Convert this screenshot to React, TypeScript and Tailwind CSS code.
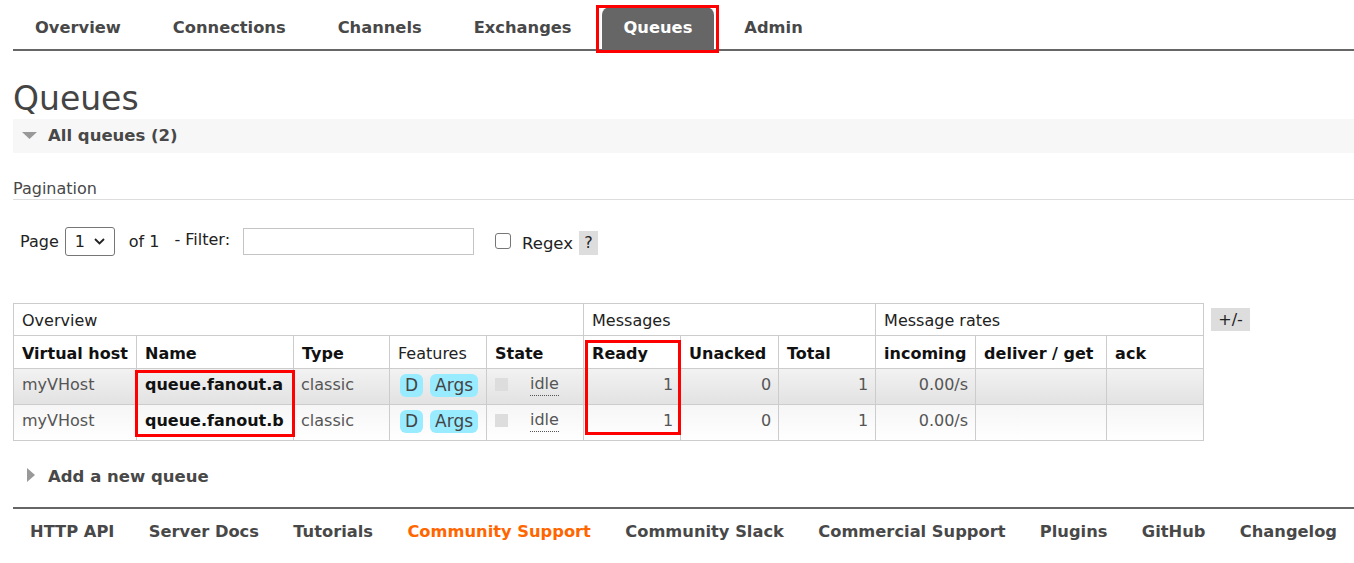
import React from "react";

const font = { fontFamily: '"DejaVu Sans", Verdana, sans-serif' };

function Badge({ children }: { children: React.ReactNode }) {
  return (
    <span className="inline-flex items-center justify-center h-[23px] px-[5px] rounded-[6px] bg-[#99ebff] text-[#444] text-[17px] leading-none">
      {children}
    </span>
  );
}

const tabs = ["Overview", "Connections", "Channels", "Exchanges", "Queues", "Admin"];
const footer = [
  "HTTP API",
  "Server Docs",
  "Tutorials",
  "Community Support",
  "Community Slack",
  "Commercial Support",
  "Plugins",
  "GitHub",
  "Changelog",
];

const rows = [
  { name: "queue.fanout.a", bg: "bg-linear-to-b from-[#f2f2f2] to-[#e2e2e2]" },
  { name: "queue.fanout.b", bg: "bg-linear-to-b from-[#f6f6f6] to-[#ffffff]" },
];

export default function App() {
  return (
    <div className="w-[1354px] h-[563px] bg-white text-[#484848] overflow-hidden" style={font}>
      {/* Nav */}
      <div className="ml-[13px] pt-[7px] border-b-2 border-[#666] flex gap-2">
        {tabs.map((t) =>
          t === "Queues" ? (
            <div key={t} className="relative">
              <div className="h-[42px] px-[22px] flex items-center bg-[#666] text-white font-bold text-[16.3px] rounded-t-[8px]">
                {t}
              </div>
              <div className="absolute left-[-6px] top-[-2px] w-[123px] h-[48px] border-[3px] border-[#ff0000]" />
            </div>
          ) : (
            <div key={t} className="h-[42px] px-[22px] flex items-center font-bold text-[16.3px] text-[#484848]">
              {t}
            </div>
          )
        )}
      </div>

      {/* Heading */}
      <h1 className="ml-[13px] pt-[27px] text-[33px] leading-[41px] text-[#444] font-normal">Queues</h1>

      {/* All queues bar */}
      <div className="ml-[13px] h-[34px] bg-[#f7f7f7] flex items-center pl-[9px]">
        <svg width="15" height="8" viewBox="0 0 15 8" className="mr-[11px]">
          <polygon points="0,0 15,0 7.5,7" fill="#999" />
        </svg>
        <span className="font-bold text-[16.5px] text-[#484848]">All queues (2)</span>
      </div>

      {/* Pagination label */}
      <div className="ml-[13px] mt-[26px] h-[21px] flex items-center border-b border-[#ddd] text-[16px] text-[#484848]">
        <span className="-mt-[1px]">Pagination</span>
      </div>

      {/* Pagination row */}
      <div className="ml-[20px] mt-[27px] h-[29px] flex items-center text-[16px] text-[#222]">
        <span>Page</span>
        <div className="ml-[6px] w-[50px] h-[29px] border border-[#767676] rounded-[3px] flex items-center pl-[9px] gap-[9px]">
          <span>1</span>
          <svg width="11" height="7" viewBox="0 0 11 7">
            <polyline points="1,1 5.5,5.5 10,1" fill="none" stroke="#222" strokeWidth="1.8" />
          </svg>
        </div>
        <span className="ml-[14px]">of 1</span>
        <span className="ml-[15px] -mt-[3px]">- Filter:</span>
        <div className="ml-[13px] w-[231px] h-[27px] border border-[#c4c4c4]" />
        <div className="ml-[21px] w-[16px] h-[16px] border border-[#767676] rounded-[3px] -mt-[2px]" />
        <span className="ml-[11px] mt-[5px] text-[16.5px]">Regex</span>
        <span className="ml-[6px] w-[19px] h-[24px] bg-[#ddd] flex items-center justify-center mt-[2px]">?</span>
      </div>

      {/* Table */}
      <div className="ml-[13px] mt-[47px] flex items-start">
        <div className="relative">
          <table className="border-collapse text-[16px] table-fixed w-[1190px]">
            <colgroup>
              <col className="w-[123px]" />
              <col className="w-[157px]" />
              <col className="w-[96px]" />
              <col className="w-[97px]" />
              <col className="w-[97px]" />
              <col className="w-[97px]" />
              <col className="w-[98px]" />
              <col className="w-[97px]" />
              <col className="w-[100px]" />
              <col className="w-[131px]" />
              <col className="w-[97px]" />
            </colgroup>
            <thead>
              <tr className="h-[32px] text-[#222]">
                <th colSpan={5} className="border border-[#ccc] text-left font-normal px-[8px] pt-[3px]">Overview</th>
                <th colSpan={3} className="border border-[#ccc] text-left font-normal px-[8px] pt-[3px]">Messages</th>
                <th colSpan={3} className="border border-[#ccc] text-left font-normal px-[8px] pt-[3px]">Message rates</th>
              </tr>
              <tr className="h-[33px] text-[#111]">
                {["Virtual host", "Name", "Type", "Features", "State", "Ready", "Unacked", "Total", "incoming", "deliver / get", "ack"].map(
                  (h) => (
                    <th
                      key={h}
                      className={`border border-[#ccc] text-left px-[8px] whitespace-nowrap pt-[4px] ${
                        h === "Features" ? "font-normal text-[#222]" : "font-bold"
                      }`}
                    >
                      {h}
                    </th>
                  )
                )}
              </tr>
            </thead>
            <tbody>
              {rows.map((r) => (
                <tr key={r.name} className={`h-[36px] ${r.bg} text-[#555]`}>
                  <td className="border border-[#ccc] px-[8px] align-top pt-[4px]">myVHost</td>
                  <td className="border border-[#ccc] px-[8px] align-top pt-[4px] font-bold text-[#111] whitespace-nowrap">{r.name}</td>
                  <td className="border border-[#ccc] px-[7px] align-top pt-[4px]">classic</td>
                  <td className="border border-[#ccc] pl-[10px] align-top pt-[5px]">
                    <div className="flex gap-[7px]">
                      <Badge>D</Badge>
                      <Badge>Args</Badge>
                    </div>
                  </td>
                  <td className="border border-[#ccc] pl-[8px] align-top pt-[4px]">
                    <div className="flex items-start">
                      <span className="w-[13px] h-[13px] bg-[#ddd] mt-[5px]" />
                      <span className="ml-[22px] border-b border-dotted border-[#555] leading-[22px]">idle</span>
                    </div>
                  </td>
                  <td className="border border-[#ccc] px-[7px] text-right align-top pt-[4px]">1</td>
                  <td className="border border-[#ccc] px-[7px] text-right align-top pt-[4px]">0</td>
                  <td className="border border-[#ccc] px-[7px] text-right align-top pt-[4px]">1</td>
                  <td className="border border-[#ccc] px-[7px] text-right align-top pt-[4px]">0.00/s</td>
                  <td className="border border-[#ccc]" />
                  <td className="border border-[#ccc]" />
                </tr>
              ))}
            </tbody>
          </table>
          <div className="absolute left-[122px] top-[67px] w-[160px] h-[67px] border-[3px] border-[#ff0000] pointer-events-none" />
          <div className="absolute left-[572px] top-[37px] w-[96px] h-[95px] border-[3px] border-[#ff0000] pointer-events-none" />
        </div>
        <div className="ml-[7px] mt-[5px] w-[39px] h-[23px] bg-[#ddd] flex items-center justify-center text-[16px] text-[#222]">
          +/-
        </div>
      </div>

      {/* Add a new queue */}
      <div className="ml-[13px] mt-[24px] h-[24px] flex items-center pl-[14px]">
        <svg width="8" height="14" viewBox="0 0 8 14" className="mr-[13px] -mt-[4px]">
          <polygon points="0,0 8,7 0,14" fill="#999" />
        </svg>
        <span className="font-bold text-[16.5px] text-[#484848]">Add a new queue</span>
      </div>

      {/* Footer */}
      <div className="ml-[13px] mt-[18px] border-t-2 border-[#666] pt-[1px] h-[47px] flex items-center justify-between px-[17px]">
        {footer.map((f) => (
          <span
            key={f}
            className={`font-bold text-[16.3px] ${f === "Community Support" ? "text-[#ff6600]" : "text-[#484848]"}`}
          >
            {f}
          </span>
        ))}
      </div>
    </div>
  );
}
